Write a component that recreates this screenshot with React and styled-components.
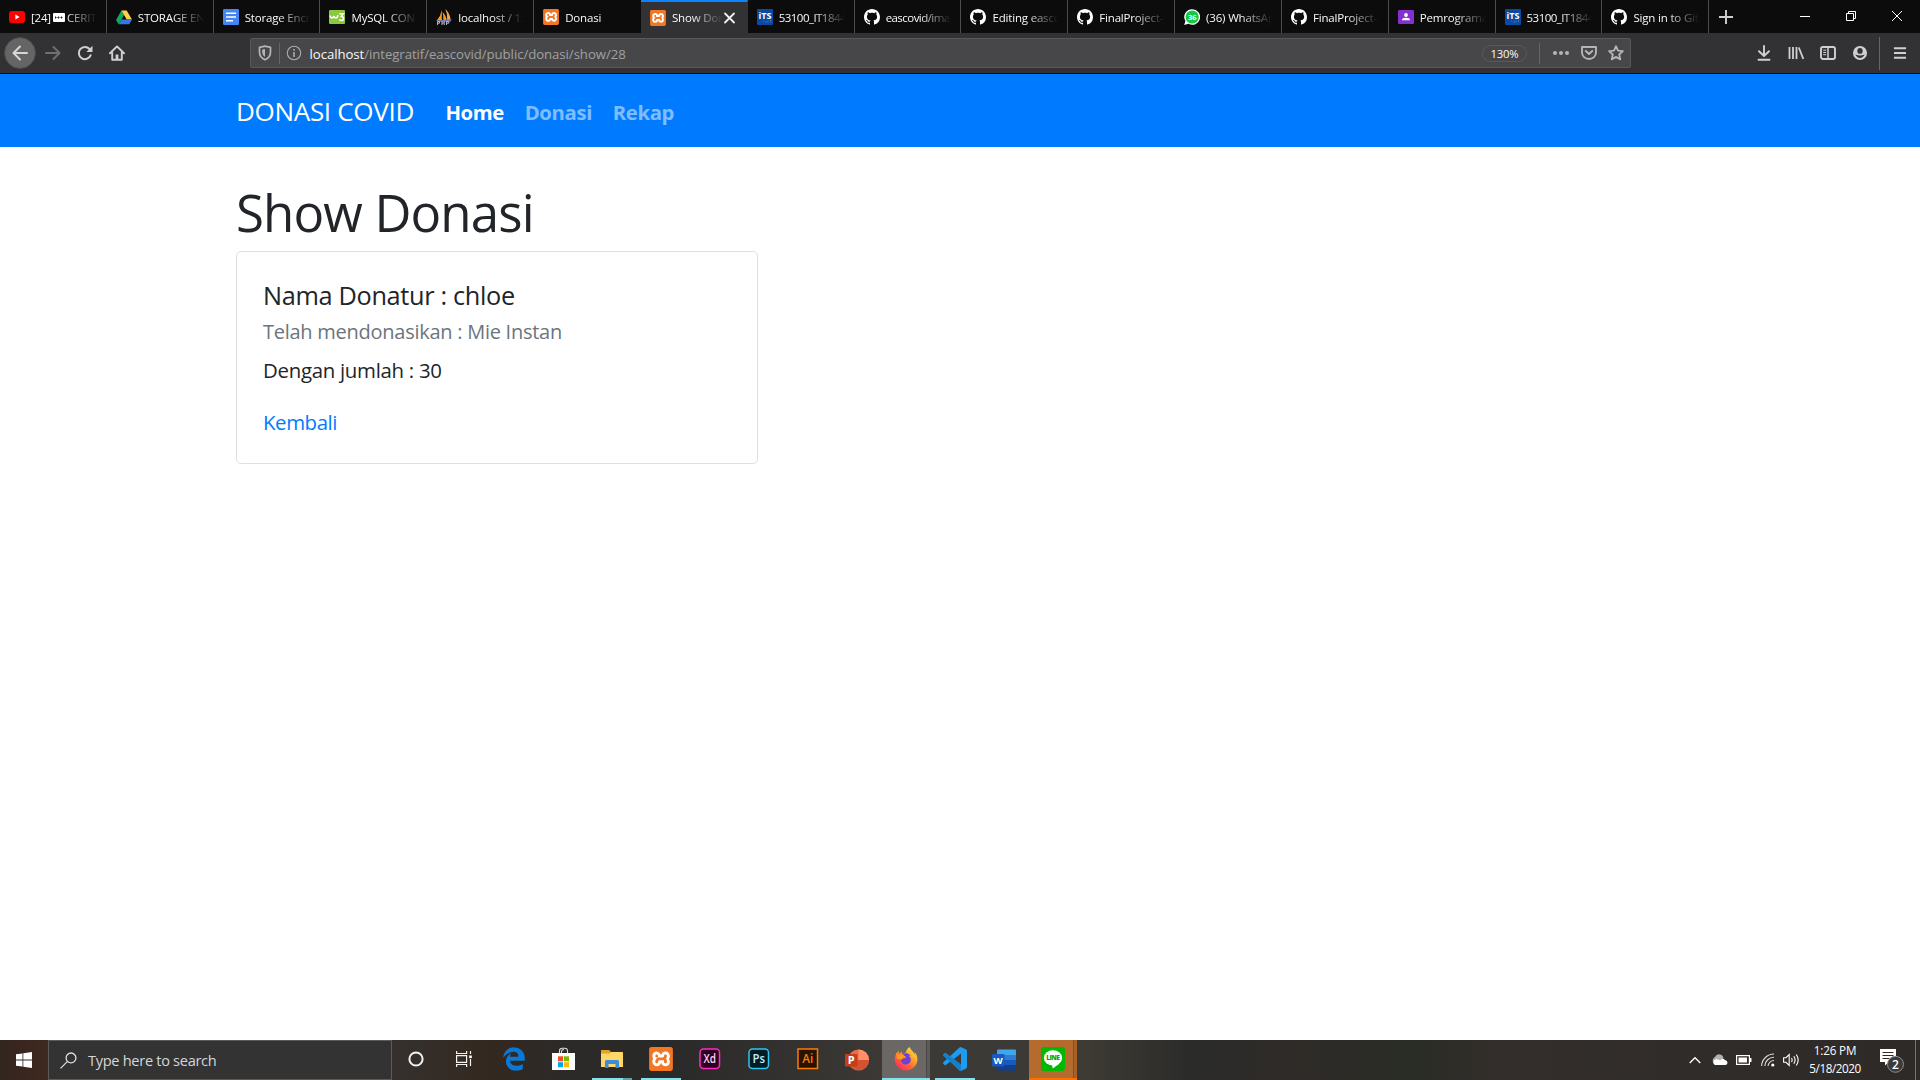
import React from "react";
import styled, { createGlobalStyle } from "styled-components";
import { SiXampp } from "react-icons/si";
import { FaFirefoxBrowser, FaEdgeLegacy } from "react-icons/fa";

const GlobalStyle = createGlobalStyle`
  * { box-sizing: border-box; }
  body { margin: 0; background: #fff; overflow: hidden; }
`;

const Screen = styled.div`
  width: 1920px;
  height: 1080px;
  display: flex;
  flex-direction: column;
  font-family: "Open Sans", "Noto Sans", sans-serif;
  white-space: nowrap;
  svg { display: block; flex: none; }
`;

/* ---------- tab strip ---------- */

const TabStrip = styled.div`
  height: 33px;
  flex: none;
  display: flex;
  background: #0c0c0d;
`;

const Tab = styled.div`
  width: 106.83px;
  height: 33px;
  padding: ${(p) => (p.$active ? "0" : "1px")} 9px 0 9px;
  display: flex;
  align-items: center;
  border-right: 1px solid ${(p) => (p.$flush ? "transparent" : "#4d4d4e")};
  ${(p) => p.$active && `
    background: #323234;
    border-top: 2px solid #0a84ff;
    border-right-color: #323234;
  `}
`;

const TabTitle = styled.div`
  flex: 1;
  min-width: 0;
  margin-left: 6px;
  padding-top: 1px;
  overflow: hidden;
  color: #f9f9fa;
  font-size: 11.5px;
  line-height: 18px;
  letter-spacing: ${(p) => (p.$tight ? "-0.55px" : "-0.18px")};
  mask-image: linear-gradient(to right, #000 calc(100% - 32px), transparent 100%);
`;

const NewTab = styled.div`
  width: 34px;
  display: flex;
  align-items: center;
  justify-content: center;
`;

const WindowButtons = styled.div`
  margin-left: auto;
  display: flex;
`;

const WindowButton = styled.div`
  width: 46px;
  height: 31px;
  display: flex;
  align-items: center;
  justify-content: center;
`;

/* ---------- toolbar ---------- */

const Toolbar = styled.div`
  height: 41px;
  flex: none;
  display: flex;
  align-items: center;
  padding-left: 4px;
  background: #323234;
  border-bottom: 1px solid #0c0c0d;
`;

const BackButton = styled.div`
  width: 32px;
  height: 32px;
  margin-right: 1px;
  border-radius: 50%;
  background: #656566;
  border: 1px solid #48484a;
  display: flex;
  align-items: center;
  justify-content: center;
`;

const ToolButton = styled.div`
  width: 32px;
  height: 32px;
  display: flex;
  align-items: center;
  justify-content: center;
`;

const AddressBar = styled.div`
  width: 1381px;
  height: 30px;
  margin-left: 117px;
  display: flex;
  align-items: center;
  background: #474749;
  border: 1px solid #59595b;
  border-radius: 2px;
`;

const BarItem = styled.div`
  width: ${(p) => p.$w}px;
  display: flex;
  justify-content: center;
`;

const Divider = styled.div`
  width: 1px;
  height: ${(p) => p.$h}px;
  background: #65656a;
`;

const Address = styled.div`
  flex: 1;
  padding: 2px 0 0 1.5px;
  font-size: 13.2px;
  line-height: 20px;
  letter-spacing: -0.06px;
  color: #a0a0a2;
  b { font-weight: 400; color: #f9f9fa; }
`;

const Zoom = styled.div`
  width: 45px;
  height: 17px;
  margin-right: 12px;
  border: 1px solid #59595b;
  border-radius: 9px;
  color: #f9f9fa;
  font-size: 11.3px;
  line-height: 15px;
  letter-spacing: -0.24px;
  text-align: center;
`;

const ToolbarEnd = styled.div`
  margin-left: auto;
  display: flex;
  align-items: center;
`;

/* ---------- page ---------- */

const Navbar = styled.nav`
  height: 73px;
  flex: none;
  display: flex;
  align-items: center;
  padding-left: 236px;
  background: #007bff;
`;

const Brand = styled.div`
  width: 199px;
  color: #fff;
  font-size: 26px;
  line-height: 40px;
  letter-spacing: -0.3px;
`;

const NavLink = styled.div`
  padding: 3px 10.4px 0;
  color: ${(p) => (p.$active ? "#fff" : "rgba(255, 255, 255, 0.5)")};
  font-size: 20.3px;
  font-weight: 700;
  line-height: 30px;
  letter-spacing: -0.36px;
`;

const Page = styled.main`
  flex: 1;
  padding: 34px 0 0 236px;
  color: #212529;
`;

const Heading = styled.h1`
  margin: 0 0 8px;
  font-size: 51px;
  font-weight: 400;
  line-height: 62px;
  letter-spacing: -0.86px;
`;

const Card = styled.section`
  width: 522px;
  height: 213px;
  padding: 27px 26px 0;
  border: 1px solid #dfdfdf;
  border-radius: 5px;
`;

const CardTitle = styled.h5`
  margin: 0;
  font-size: 25.3px;
  font-weight: 400;
  line-height: 32px;
  letter-spacing: -0.33px;
`;

const CardSubtitle = styled.h6`
  margin: 5px 0 0;
  color: #6c757d;
  font-size: 20px;
  font-weight: 400;
  line-height: 31px;
  letter-spacing: -0.26px;
`;

const CardText = styled.p`
  margin: 8px 0 0;
  font-size: 20.4px;
  line-height: 31px;
  letter-spacing: -0.28px;
`;

const CardLink = styled.a`
  display: block;
  margin-top: 21px;
  color: #007bff;
  font-size: 20.4px;
  line-height: 31px;
  letter-spacing: -0.4px;
`;

/* ---------- taskbar ---------- */

const Taskbar = styled.footer`
  height: 40px;
  flex: none;
  display: flex;
  background: linear-gradient(to right, #33251f 0, #40291f 48px, #35302d 400px, #33281f 490px,
    #2c2a28 560px, #292929 660px, #33312f 780px, #3d3a36 900px, #3c3a36 1020px, #3d3b33 1085px,
    #2b2b2a 1190px, #2f2b28 1290px, #2a2c26 1410px, #332e2b 1500px, #2d2a28 1920px);
`;

const Start = styled.div`
  width: 48px;
  display: flex;
  align-items: center;
  justify-content: center;
`;

const Search = styled.div`
  width: 344px;
  display: flex;
  align-items: center;
  padding-left: 11px;
  gap: 11px;
  background: #333;
  border: 1px solid #5c5b5a;
  color: #d6d6d6;
  font-size: 14.6px;
  letter-spacing: -0.31px;
`;

const Task = styled.div`
  width: 48px;
  margin-right: ${(p) => (p.$gap === undefined ? 1 : p.$gap)}px;
  display: flex;
  flex-direction: column;
  align-items: center;
  background: ${(p) => p.$bg || "transparent"};
`;

const TaskIcon = styled.div`
  height: 38px;
  display: flex;
  align-items: center;
  padding-top: ${(p) => p.$pad || 0}px;
`;

const Underline = styled.div`
  width: ${(p) => p.$w || 40}px;
  height: 2px;
  background: ${(p) => p.$color || "#82e4ea"};
`;

const Tray = styled.div`
  margin-left: auto;
  display: flex;
  align-items: center;
`;

const TrayItem = styled.div`
  width: ${(p) => p.$w}px;
  display: flex;
  justify-content: center;
`;

const Clock = styled.div`
  width: 66px;
  padding-bottom: 2px;
  color: #fff;
  font-size: 11.7px;
  line-height: 18px;
  text-align: center;
  letter-spacing: -0.17px;
  span { display: block; letter-spacing: -0.45px; }
`;

const ShowDesktop = styled.div`
  width: 5px;
  height: 40px;
  border-left: 1px solid #767472;
`;

/* ---------- icons ---------- */

const Svg = ({ w = 16, h = w, vb, children, ...rest }) => (
  <svg width={w} height={h} viewBox={vb || `0 0 ${w} ${h}`} fill="none" {...rest}>{children}</svg>
);

const YouTube = () => (
  <Svg><rect y="2" width="16" height="12" rx="3" fill="#f00" /><path d="M6.4 5.6v4.8L10.6 8z" fill="#fff" /></Svg>
);
const Drive = () => (
  <Svg>
    <path d="M5.4 1.5 0 11l2.7 4.2L8.1 6z" fill="#11a861" />
    <path d="M5.4 1.5h5.3L16 10.6h-5.3z" fill="#ffcf48" />
    <path d="M2.7 15.2 5.3 10.6H16l-2.7 4.6z" fill="#3777e3" />
  </Svg>
);
const Docs = () => (
  <Svg><rect width="16" height="16" rx="1.2" fill="#4285f4" /><path d="M3 4.2h10M3 8h10M3 11.8h7" stroke="#fff" strokeWidth="1.6" /></Svg>
);
const W3 = () => (
  <Svg>
    <rect y="1" width="16" height="14" rx="1" fill="#8dc63f" />
    <path d="M1 6.5q.4 2.4 1.9 2.4T4.9 7q.2 1.9 2 1.9T9 6.2M10.3 4.8h4l-2 2.6q2.2.2 2.2 2t-2 2q-1.6 0-2.2-1" stroke="#fff" strokeWidth="1.5" />
  </Svg>
);
const Sails = () => (
  <Svg>
    <path d="M5.8 1v10.500H.8Q4.700 7 5.800 1zM6.500 3q1.200 4 .8 8.500h3.500Q10 6 6.500 3z" fill="#f89c0e" />
    <path d="M9.300 0q4.300 3.500 5.400 10.500l-3.500.8Q11.800 5 9.300 0z" fill="#f3a44c" />
    <path d="M0 11.200l15.700-.8-1.400 2.400H1.500z" fill="#6c78af" />
    <path d="M1.500 16v-3.500h2v1.700h-2M6 16v-4M8.200 16v-4M6 14h2.200M10.500 16v-3.500h2.300v1.700h-2" stroke="#b5b5c4" />
  </Svg>
);
const Xampp = ({ size = 16 }) => (
  <Svg w={size} vb="0 0 24 24">
    <rect x="2" y="2" width="20" height="20" fill="#fff" />
    <SiXampp size={24} color="#f37623" />
  </Svg>
);
const Its = () => (
  <Svg>
    <rect width="16" height="16" rx="1" fill="#0b4aa2" />
    <text x="8" y="10" fontSize="8" fontWeight="700" textAnchor="middle" textLength="13" lengthAdjust="spacingAndGlyphs" fill="#fff">iTS</text>
    <path d="M6 12h1M9 12v2M11 11.500v2M13.500 11v2" stroke="#3b73bb" />
  </Svg>
);
const GitHub = () => (
  <Svg>
    <path fill="#fff" d="M8 0C3.58 0 0 3.58 0 8c0 3.54 2.29 6.53 5.47 7.59.4.07.55-.17.55-.38 0-.19-.01-.82-.01-1.49-2.01.37-2.53-.49-2.69-.94-.09-.23-.48-.94-.82-1.13-.28-.15-.68-.52-.01-.53.63-.01 1.08.58 1.23.82.72 1.21 1.87.87 2.33.66.07-.52.28-.87.51-1.07-1.78-.2-3.64-.89-3.64-3.95 0-.87.31-1.59.82-2.15-.08-.2-.36-1.02.08-2.12 0 0 .67-.21 2.2.82.64-.18 1.32-.27 2-.27.68 0 1.36.09 2 .27 1.53-1.04 2.2-.82 2.2-.82.44 1.1.16 1.92.08 2.12.51.56.82 1.27.82 2.15 0 3.07-1.87 3.75-3.65 3.95.29.25.54.73.54 1.48 0 1.07-.01 1.93-.01 2.2 0 .21.15.46.55.38A8.013 8.013 0 0 0 16 8c0-4.42-3.58-8-8-8z" />
  </Svg>
);
const WhatsApp = () => (
  <Svg>
    <path d="M8.200.2a7.800 7.800 0 1 1-3.700 14.600L.2 16l1.200-4A7.800 7.800 0 0 1 8.200.2z" fill="#fff" />
    <circle cx="8.200" cy="8" r="6.600" fill="#12c845" />
    <text x="8.200" y="10.600" fontSize="7.500" fontWeight="700" letterSpacing="0" textAnchor="middle" fill="#fff">36</text>
  </Svg>
);
const Classroom = () => (
  <Svg>
    <rect y="1" width="16" height="14" rx="1.200" fill="#8430ce" />
    <circle cx="8" cy="6" r="1.900" fill="#fff" /><path d="M4 11.200q0-2.400 4-2.400t4 2.400z" fill="#fff" />
  </Svg>
);
const Speech = styled.span`
  display: inline-block;
  width: 12px;
  height: 9px;
  margin: 0 2px;
  border-radius: 1px;
  background: radial-gradient(circle at 50% 50%, #222 0.8px, transparent 1.2px) 0 0 / 3px 9px content-box, #fff;
  padding: 0 1.5px;
`;

const Back = () => <Svg><path d="M15 8H1.500M8 1.500 1.500 8 8 14.500" stroke="#d7d7d8" strokeWidth="2" strokeLinecap="round" strokeLinejoin="round" /></Svg>;
const Forward = () => <Svg><path d="M1 8h13.500M8.500 2l6 6-6 6" stroke="#6f6f71" strokeWidth="2" strokeLinecap="round" strokeLinejoin="round" /></Svg>;
const Reload = () => (
  <Svg>
    <path d="M13.600 10.300A6.100 6.100 0 1 1 12.500 4" stroke="#d0d0d1" strokeWidth="2" strokeLinecap="round" />
    <path d="M15.500.8v6.200H9.300z" fill="#d0d0d1" />
  </Svg>
);
const Home = () => (
  <Svg>
    <path d="M1 8.300 8 1.400l7 6.900M3.200 7.500V14.800h9.600V7.500" stroke="#d0d0d1" strokeWidth="1.900" strokeLinecap="round" strokeLinejoin="round" />
    <path d="M6.600 15V9.500h2.800V15z" fill="#d0d0d1" />
  </Svg>
);
const Shield = () => (
  <Svg w={14} h={16}>
    <path d="M7 1.200 1.500 2.400V7q0 5.500 5.500 7.800Q12.500 12.500 12.500 7V2.400z" stroke="#b5b5b7" strokeWidth="1.700" strokeLinejoin="round" />
    <path d="M7 4v8Q4.200 10.400 4.200 7V4.500z" fill="#b5b5b7" />
  </Svg>
);
const Info = () => (
  <Svg><circle cx="8" cy="8" r="6.700" stroke="#a9a9ab" strokeWidth="1.100" /><path d="M8 7v5M8 4v1.700" stroke="#a9a9ab" strokeWidth="1.600" /></Svg>
);
const Dots = () => <Svg><circle cx="2" cy="8" r="2" fill="#b5b5b7" /><circle cx="8" cy="8" r="2" fill="#b5b5b7" /><circle cx="14" cy="8" r="2" fill="#b5b5b7" /></Svg>;
const Pocket = () => (
  <Svg>
    <path d="M1 2h14v5.500A7 6.500 0 0 1 1 7.500z" stroke="#b5b5b7" strokeWidth="1.900" strokeLinejoin="round" />
    <path d="M4.800 6 8 9l3.200-3" stroke="#b5b5b7" strokeWidth="2" strokeLinecap="round" strokeLinejoin="round" />
  </Svg>
);
const Star = () => <Svg><path d="m8 1.200 2 4.500 4.900.5-3.700 3.300 1.100 4.900L8 11.900l-4.300 2.500 1.100-4.900L1.100 6.200 6 5.700z" stroke="#b5b5b7" strokeWidth="1.800" strokeLinejoin="round" /></Svg>;
const Download = () => <Svg><path d="M8 1v9.500M3 6.200 8 11l5-4.800M2.500 14.800h11" stroke="#d0d0d1" strokeWidth="1.900" strokeLinecap="round" strokeLinejoin="round" /></Svg>;
const Library = () => <Svg><path d="M1.500 2v12M5 2v12M8.500 2v12M10.800 2.500 15.300 14" stroke="#d0d0d1" strokeWidth="1.800" /></Svg>;
const Sidebar = () => (
  <Svg><rect x="1" y="2" width="14" height="12" rx="2" stroke="#d0d0d1" strokeWidth="1.900" /><path d="M8 2v12" stroke="#d0d0d1" strokeWidth="1.500" /><path d="M3.200 5.200h3M3.200 7.500h3M3.200 9.700h3" stroke="#d0d0d1" /></Svg>
);
const Account = () => (
  <Svg>
    <circle cx="8" cy="8" r="7" fill="#d0d0d1" /><path d="M8 3a2.700 2.900 0 0 1 0 5.800A2.700 2.900 0 0 1 8 3z" fill="#323234" />
    <path d="M3.300 9.600Q8 11.600 12.700 9.600 11 13 8 13T3.300 9.600z" fill="#323234" />
  </Svg>
);
const Menu = () => <Svg><path d="M2 3.200h12M2 8h12M2 12.800h12" stroke="#d0d0d1" strokeWidth="1.900" /></Svg>;

const Windows = () => <Svg><path d="M0 2.300 6.500 1.400v6.200H0zM7.300 1.300 16 0v7.600H7.300zM0 8.400h6.500v6.200L0 13.700zM7.300 8.400H16V16l-8.700-1.300z" fill="#fff" /></Svg>;
const SearchGlass = () => <Svg w={17}><circle cx="11" cy="5.900" r="4.900" stroke="#e0e0e0" strokeWidth="1.300" /><path d="m7.500 9.400-7 7" stroke="#e0e0e0" strokeWidth="1.300" /></Svg>;
const Cortana = () => <Svg><circle cx="8" cy="8" r="6.600" stroke="#f2f2f2" strokeWidth="2" /></Svg>;
const TaskView = () => (
  <Svg>
    <path d="M.6 0v2.500h10V0M.6 16v-2.500h10V16M.6 4.600h10v6.800H.6zM14.500 0v3M14.500 8v7" stroke="#f2f2f2" strokeWidth="1.200" />
    <path d="M13.200 4.500h2.600v2.600h-2.600z" fill="#fff" />
  </Svg>
);
const Store = () => (
  <Svg w={23} h={24}>
    <path d="M0 6h23v16.500q0 .5-.5.5H.5q-.5 0-.5-.5z" fill="#fff" />
    <path d="M7.500 6V4q0-2.800 2.700-2.800h2.600q2.700 0 2.700 2.800v2M9.500 6V5Q9.500 2.500 12 2.500" stroke="#ddd" strokeWidth="1.100" />
    <path d="M6 9.300h5v5H6z" fill="#f25022" /><path d="M12 9.300h5v5h-5z" fill="#7fba00" />
    <path d="M6 15.200h5v5H6z" fill="#00a4ef" /><path d="M12 15.200h5v5h-5z" fill="#ffb900" />
  </Svg>
);
const Explorer = () => (
  <Svg w={22} h={20}>
    <path d="M0 1h8l2 2h11q1 0 1 1v13H0z" fill="#e0a526" />
    <path d="M0 4.500h8.500L10.500 3H21q1 0 1 1v14H0z" fill="#ffd768" />
    <path d="M4 19v-6.500q0-1.500 1.500-1.500h11q1.500 0 1.500 1.500V19h-3.500v-4h-7v4z" fill="#3a8ed8" />
  </Svg>
);
const labelColors = { Xd: "#ffd2f4", Ps: "#c5edf8", Ai: "#ff7c00" };
const Adobe = ({ label, bg, fg, round }) => (
  <Svg w={22}>
    <rect x="1" y="1" width="19.500" height="19.500" rx={round ? 3.500 : 0} fill={bg} stroke={fg} strokeWidth="1.500" />
    <text x="10.800" y="15" fontSize="12" fontWeight="600" textAnchor="middle" textLength={label === "Ai" ? 11 : 12.500} lengthAdjust="spacingAndGlyphs" fill={labelColors[label]}>{label}</text>
  </Svg>
);
const PowerPoint = () => (
  <Svg w={24} h={22}>
    <circle cx="13.500" cy="11" r="10.500" fill="#ed6c47" /><path d="M13.500.5A10.500 10.500 0 0 1 24 11H13.500z" fill="#ff8f6b" />
    <path d="M3 11h21a10.500 10.500 0 0 1-20 4z" fill="#d35230" />
    <rect y="5" width="12.500" height="12.500" rx="1" fill="#c43e1c" />
    <text x="6.200" y="15.200" fontSize="11" fontWeight="700" textAnchor="middle" fill="#fff">P</text>
  </Svg>
);
const Firefox = () => (
  <Svg w={24} h={24}>
    <defs>
      <linearGradient id="flame" x1="1" y1="0" x2="0.200" y2="1">
        <stop offset="0" stopColor="#fff44f" /><stop offset=".35" stopColor="#ffb02e" /><stop offset=".65" stopColor="#ff6a30" /><stop offset="1" stopColor="#f6246e" />
      </linearGradient>
    </defs>
    <circle cx="12.500" cy="12" r="6.500" fill="#6f3fd6" />
    <FaFirefoxBrowser size={24} style={{ fill: "url(#flame)" }} />
    <path d="M2.200 5.500 4.600 7.500l4-.5 3 3q-3 .3-3.500 2.500L3 12z" fill="#ff9a1f" />
  </Svg>
);
const VsCode = () => (
  <Svg w={24}>
    <path fill="#1f9cf0" d="M23.150 2.587 18.210.210a1.494 1.494 0 0 0-1.705.290l-9.460 8.630-4.120-3.128a.999.999 0 0 0-1.276.057L.327 7.261A1 1 0 0 0 .326 8.740L3.899 12 .326 15.260a1 1 0 0 0 .001 1.479L1.650 17.940a.999.999 0 0 0 1.276.057l4.120-3.128 9.460 8.630a1.492 1.492 0 0 0 1.704.290l4.942-2.377A1.500 1.500 0 0 0 24 20.060V3.939a1.500 1.500 0 0 0-.850-1.352zm-5.146 14.861L10.826 12l7.178-5.448v10.896z" />
    <path fill="#0a6ab5" d="M.3 7.300 1.700 6q.6-.5 1.300 0l15 11.450v6.200q-.9.300-1.600-.3L.3 8.700q-.6-.7 0-1.400z" opacity=".55" />
  </Svg>
);
const Word = () => (
  <Svg w={24} h={22}>
    <path d="M6 .5h17q1 0 1 1v5H5v-5q0-1 1-1z" fill="#41a5ee" /><path d="M5 6h19v5H5z" fill="#2b7cd3" />
    <path d="M5 11h19v5H5z" fill="#185abd" /><path d="M5 16h19v4.500q0 1-1 1H6q-1 0-1-1z" fill="#103f91" />
    <rect y="5" width="12.500" height="12.500" rx="1" fill="#185abd" />
    <text x="6.200" y="14.800" fontSize="9.500" fontWeight="700" textAnchor="middle" fill="#fff">W</text>
  </Svg>
);
const Line = () => (
  <Svg w={24}>
    <rect width="24" height="24" rx="3" fill="#00b900" />
    <ellipse cx="12" cy="10.800" rx="9.200" ry="7.600" fill="#fff" /><path d="M11 17h7l-6.300 4.600z" fill="#fff" />
    <text x="12" y="13.300" fontSize="6.500" fontWeight="800" textAnchor="middle" textLength="13.500" fill="#00a800">LINE</text>
  </Svg>
);

const Chevron = () => <Svg w={12} h={8}><path d="m.7 7 5.300-5.300L11.300 7" stroke="#fff" strokeWidth="1.300" /></Svg>;
const Cloud = () => (
  <Svg w={17} h={12}>
    <path d="M2.500 9a4 4 0 0 1 1.500-6A4.500 4.500 0 0 1 12.500 4L8 9z" fill="#b3b2b1" />
    <path d="M4 11a3 3 0 0 1 .2-5.500Q7 4.500 9 6.500q2.500-3 5-.5 2.500.5 2.500 2.700T14 11z" fill="#fff" />
  </Svg>
);
const Battery = () => (
  <Svg w={16} h={10}><rect x=".6" y=".6" width="12.800" height="8.800" stroke="#fff" strokeWidth="1.200" /><path d="M2.500 2.500h8.500v5H2.500zM14 3h1.500v4H14z" fill="#fff" /></Svg>
);
const Wifi = () => (
  <Svg w={14} h={14}>
    <path d="M.6 13A12.400 12.400 0 0 1 13 1M3.800 13A9.200 9.200 0 0 1 13 4.200M7 13a6 6 0 0 1 6-5.500" stroke="#dedede" strokeWidth="1.100" /><circle cx="11.800" cy="12" r="1.600" fill="#fff" />
  </Svg>
);
const Volume = () => (
  <Svg w={17} h={14}>
    <path d="M.6 4.700H3L6.200 1.500v11L3 9.300H.6z" stroke="#fff" strokeWidth="1.100" />
    <path d="M8.500 5q1.300 2 0 4M10.800 3.200q2.600 3.800 0 7.600M13.200 1.500q4 5.500 0 11" stroke="#fff" strokeWidth="1.100" />
  </Svg>
);
const Notifications = () => (
  <Svg w={26} h={26}>
    <path d="M1 2h16v13H10l-4 3.500V15H1z" fill="#fff" /><path d="M3.500 5.500h11M3.500 8.500h11M3.500 11.500h7" stroke="#2d2a28" strokeWidth="1.200" />
    <circle cx="16.500" cy="17.300" r="8" fill="#3b3b3b" stroke="#8d8d8d" />
    <text x="16.500" y="21.500" fontSize="12" fontWeight="600" textAnchor="middle" fill="#fff">2</text>
  </Svg>
);

const tabs = [
  { icon: <YouTube />, title: <>[24]<Speech />CERITA</> },
  { icon: <Drive />, title: "STORAGE ENGINE" },
  { icon: <Docs />, title: "Storage Encryption" },
  { icon: <W3 />, title: "MySQL CONCAT" },
  { icon: <Sails />, title: "localhost / 127.0.0.1" },
  { icon: <Xampp />, title: "Donasi", flush: true },
  { icon: <Xampp />, title: "Show Donasi", active: true },
  { icon: <Its />, title: "53100_IT184401", tight: true },
  { icon: <GitHub />, title: "eascovid/image", tight: true },
  { icon: <GitHub />, title: "Editing eascovid" },
  { icon: <GitHub />, title: "FinalProject-Int" },
  { icon: <WhatsApp />, title: "(36) WhatsApp" },
  { icon: <GitHub />, title: "FinalProject-Int" },
  { icon: <Classroom />, title: "Pemrograman Int" },
  { icon: <Its />, title: "53100_IT184401", tight: true },
  { icon: <GitHub />, title: "Sign in to GitHub" },
];

const tasks = [
  { icon: <Cortana />, gap: 0 },
  { icon: <TaskView />, gap: 2 },
  { icon: <Svg w={24}><FaEdgeLegacy size={24} color="#0a78d7" /></Svg> },
  { icon: <Store /> },
  { icon: <Explorer />, line: { $color: "linear-gradient(to right, #82e4ea 31px, #63a2a5 31px)" } },
  { icon: <Xampp size={24} />, line: {} },
  { icon: <Adobe label="Xd" bg="#2e001f" fg="#ff2bc2" round /> },
  { icon: <Adobe label="Ps" bg="#001d26" fg="#31c5f0" round /> },
  { icon: <Adobe label="Ai" bg="#261300" fg="#ff7c00" /> },
  { icon: <PowerPoint />, pad: 1 },
  { icon: <Firefox />, line: { $w: 48 }, bg: "linear-gradient(to right, #6a6764 44px, #4b4845 44px, #4b4845 45px, #5d5a57 45px)" },
  { icon: <VsCode />, line: {} },
  { icon: <Word />, pad: 1 },
  { icon: <Line />, line: { $w: 48, $color: "#ff6f00" }, bg: "linear-gradient(to right, #b56a2e 44px, #8c4f20 44px, #8c4f20 45px, #a8602a 45px)" },
];

export default function App() {
  return (
    <Screen>
      <GlobalStyle />
      <TabStrip>
        {tabs.map((t, i) => (
          <Tab key={i} $active={t.active} $flush={t.flush}>
            {t.icon}
            <TabTitle $tight={t.tight}>{t.title}</TabTitle>
            {t.active && <Svg w={15} h={14}><path d="m2 2.500 9 9m0-9-9 9" stroke="#f0f0f0" strokeWidth="1.800" strokeLinecap="round" /></Svg>}
          </Tab>
        ))}
        <NewTab><Svg><path d="M8 1v14M1 8h14" stroke="#d0d0d1" strokeWidth="1.900" /></Svg></NewTab>
        <WindowButtons>
          <WindowButton><Svg w={10}><path d="M0 5.500h10" stroke="#fff" /></Svg></WindowButton>
          <WindowButton><Svg w={10}><path d="M.5 2.500h7v7h-7zM2.500 2.500v-2h7v7h-2" stroke="#fff" /></Svg></WindowButton>
          <WindowButton><Svg w={10}><path d="m0 0 10 10M10 0 0 10" stroke="#fff" /></Svg></WindowButton>
        </WindowButtons>
      </TabStrip>

      <Toolbar>
        <BackButton><Back /></BackButton>
        <ToolButton><Forward /></ToolButton>
        <ToolButton><Reload /></ToolButton>
        <ToolButton><Home /></ToolButton>
        <AddressBar>
          <BarItem $w={28}><Shield /></BarItem>
          <Divider $h={21} />
          <BarItem $w={28}><Info /></BarItem>
          <Address><b>localhost</b>/integratif/eascovid/public/donasi/show/28</Address>
          <Zoom>130%</Zoom>
          <Divider $h={21} />
          <BarItem $w={41}><Dots /></BarItem>
          <BarItem $w={15}><Pocket /></BarItem>
          <BarItem $w={40}><Star /></BarItem>
          <BarItem $w={-6} style={{ width: 0, marginRight: -6 }} />
        </AddressBar>
        <ToolbarEnd>
          <ToolButton><Download /></ToolButton>
          <ToolButton><Library /></ToolButton>
          <ToolButton><Sidebar /></ToolButton>
          <ToolButton><Account /></ToolButton>
          <BarItem $w={3} />
          <Divider $h={33} />
          <BarItem $w={40}><Menu /></BarItem>
        </ToolbarEnd>
      </Toolbar>

      <Navbar>
        <Brand>DONASI COVID</Brand>
        <NavLink $active>Home</NavLink>
        <NavLink>Donasi</NavLink>
        <NavLink>Rekap</NavLink>
      </Navbar>
      <Page>
        <Heading>Show Donasi</Heading>
        <Card>
          <CardTitle>Nama Donatur : chloe</CardTitle>
          <CardSubtitle>Telah mendonasikan : Mie Instan</CardSubtitle>
          <CardText>Dengan jumlah : 30</CardText>
          <CardLink>Kembali</CardLink>
        </Card>
      </Page>

      <Taskbar>
        <Start><Windows /></Start>
        <Search><SearchGlass />Type here to search</Search>
        {tasks.map((t, i) => (
          <Task key={i} $bg={t.bg} $gap={t.gap}>
            <TaskIcon $pad={t.pad}>{t.icon}</TaskIcon>
            {t.line && <Underline {...t.line} />}
          </Task>
        ))}
        <Tray>
          <TrayItem $w={24}><Chevron /></TrayItem>
          <TrayItem $w={24}><Cloud /></TrayItem>
          <TrayItem $w={25}><Battery /></TrayItem>
          <TrayItem $w={24}><Wifi /></TrayItem>
          <TrayItem $w={22}><Volume /></TrayItem>
          <Clock>1:26 PM<span>5/18/2020</span></Clock>
          <TrayItem $w={47}><Notifications /></TrayItem>
          <ShowDesktop />
        </Tray>
      </Taskbar>
    </Screen>
  );
}
